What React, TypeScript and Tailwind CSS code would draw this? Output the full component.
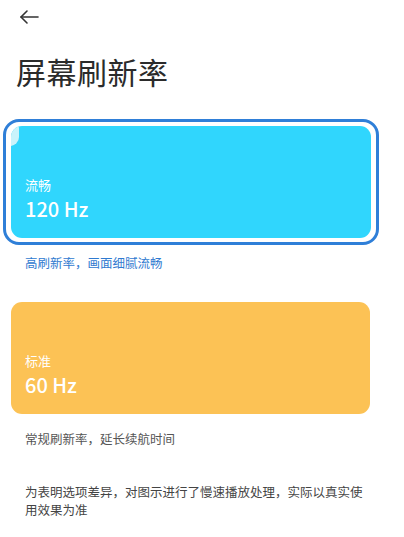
export default function App() {
  return (
    <div
      className="w-[404px] h-[537px] bg-white overflow-hidden text-[#333]"
      style={{ fontFamily: '"Noto Sans CJK SC", "Noto Sans", sans-serif' }}
    >
      <div className="pl-[19px] pt-[9px] h-[30px]">
        <svg width="20" height="16" viewBox="0 0 20 16" fill="none" stroke="#333" strokeWidth="1.6" strokeLinecap="round" strokeLinejoin="round">
          <path d="M19 8H2" />
          <path d="M8 2L2 8l6 6" />
        </svg>
      </div>

      <h1 className="pl-[16px] mt-[21px] text-[30px] leading-[40px] font-normal text-[#2b2b2b] tracking-[0.5px]">
        屏幕刷新率
      </h1>

      {/* 120 Hz - selected */}
      <div className="mt-[28px] ml-[3px] w-[376px] border-[3px] border-[#2f7fd8] rounded-[16px] px-[5px] py-[4px]">
        <div className="relative h-[112px] rounded-[11px] bg-[#30d6fd] overflow-hidden flex flex-col justify-end pl-[14px] pb-[17px]">
          <div className="absolute -left-[10px] -top-[6px] w-[18px] h-[26px] rounded-full bg-[#c9f3fb]" />
          <div className="text-[13px] leading-[16px] text-white">流畅</div>
          <div className="mt-[4px] text-[20px] leading-[24px] font-medium text-white">120 Hz</div>
        </div>
      </div>
      <p className="pl-[25px] mt-[9px] text-[12.5px] leading-[18px] text-[#2f7ad0]">高刷新率，画面细腻流畅</p>

      {/* 60 Hz */}
      <div className="mt-[30px] ml-[11px] w-[359px] h-[112px] rounded-[11px] bg-[#fcc255] flex flex-col justify-end pl-[14px] pb-[17px]">
        <div className="text-[13px] leading-[16px] text-white">标准</div>
        <div className="mt-[4px] text-[20px] leading-[24px] font-medium text-white">60 Hz</div>
      </div>
      <p className="pl-[25px] mt-[16px] text-[12.5px] leading-[18px] text-[#555]">常规刷新率，延长续航时间</p>

      <p className="pl-[25px] pr-[36px] mt-[35px] text-[12.5px] leading-[18px] text-[#444]">
        为表明选项差异，对图示进行了慢速播放处理，实际以真实使用效果为准
      </p>
    </div>
  )
}
